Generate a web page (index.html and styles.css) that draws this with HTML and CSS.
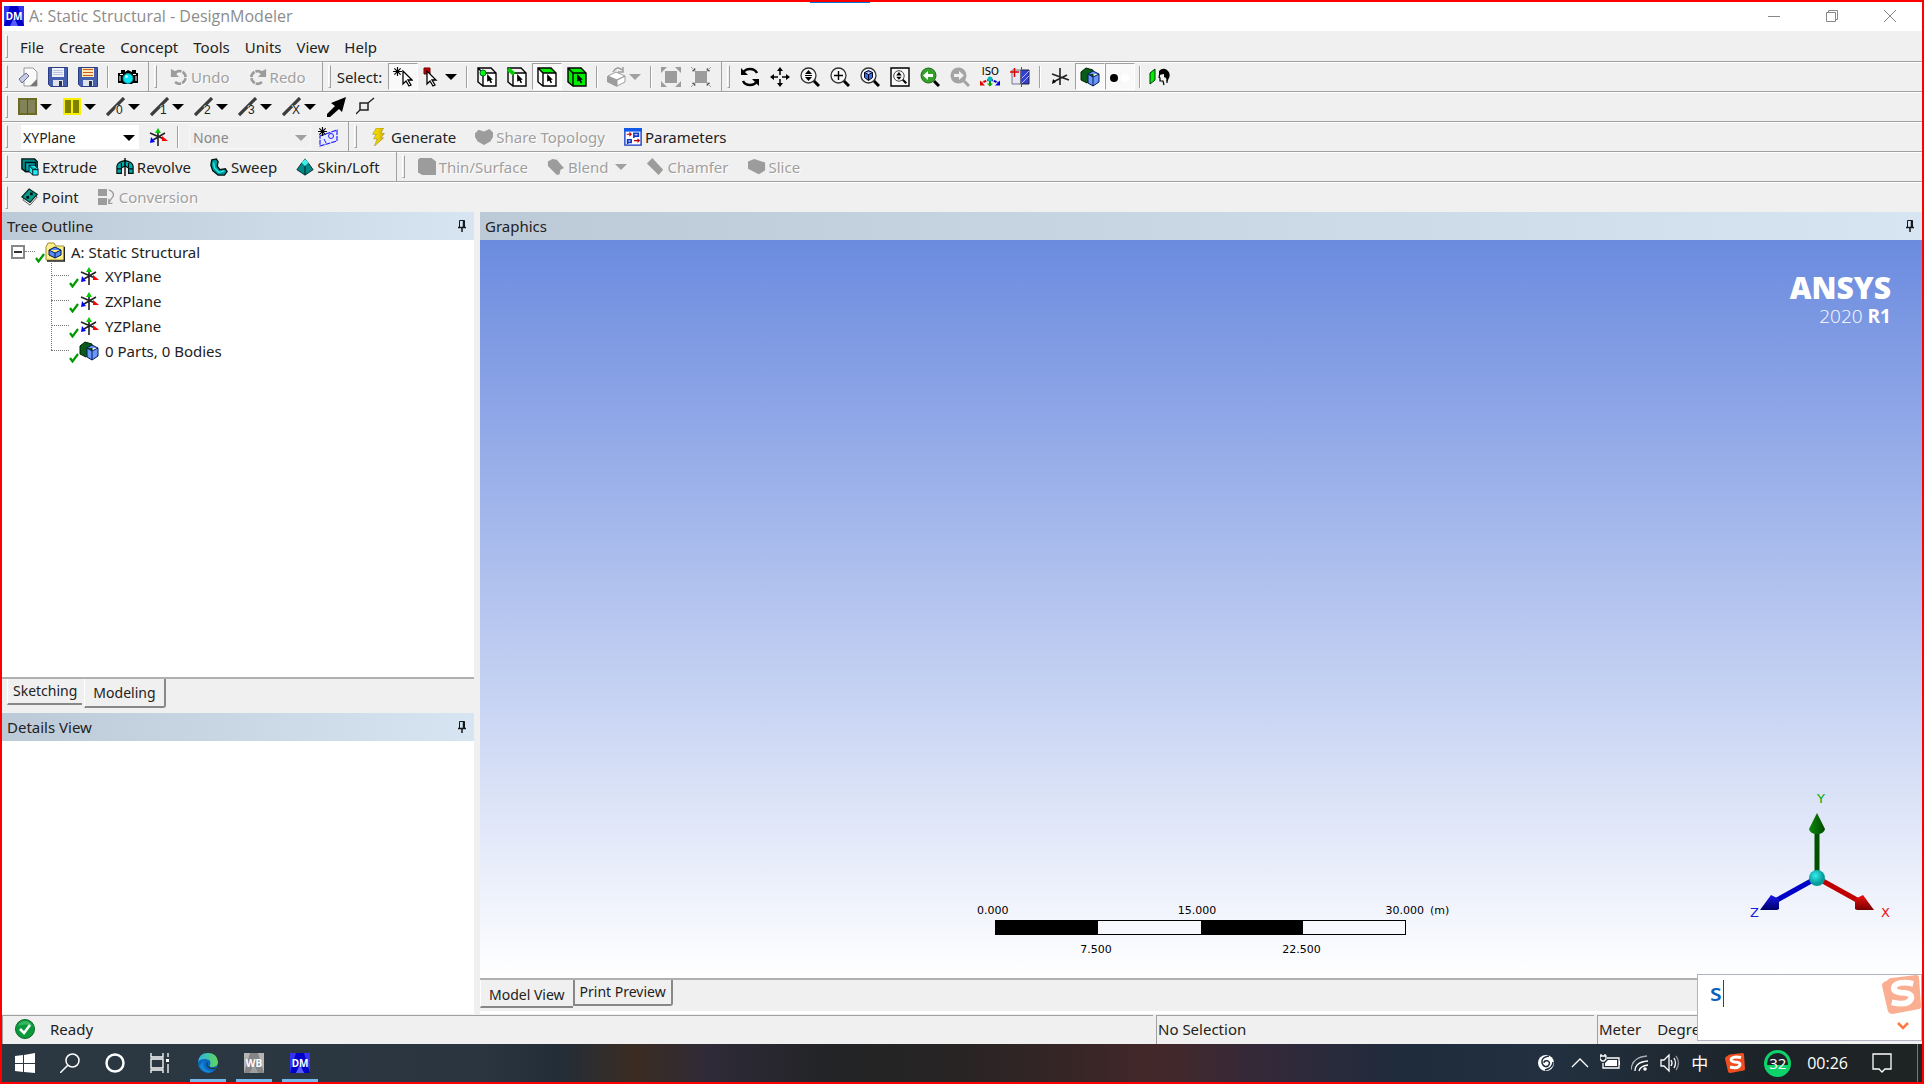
FILE: index.html
```html
<!DOCTYPE html>
<html lang="en">
<head>
<meta charset="utf-8">
<title>A: Static Structural - DesignModeler</title>
<link rel="stylesheet" href="styles.css">
</head>
<body>
<svg class="sprite" aria-hidden="true">
  <defs>
    <linearGradient id="edgeA" x1="0" y1="0" x2="1" y2="0"><stop offset="0" stop-color="#2bb3e8"/><stop offset="1" stop-color="#5fd75a"/></linearGradient>
    <linearGradient id="bolt" x1="0" y1="0" x2="1" y2="0"><stop offset="0" stop-color="#ffe800"/><stop offset="1" stop-color="#d8b400"/></linearGradient>
    <symbol id="dm" viewBox="0 0 20 20"><path fill="#3434f0" d="M0 0h20v20H0z"/><path fill="#0000c8" d="M6 0h8l6 20h-6l-4-8-4 8H0z"/><path fill="#5a5aff" d="M10 12l4 8H6z"/></symbol>
    <symbol id="wb" viewBox="0 0 20 20"><path fill="#b4b4b4" d="M0 0h20v20H0z"/><path fill="#858585" d="M6 0h8l6 20h-6l-4-8-4 8H0z"/><path fill="#a0a0a0" d="M10 12l4 8H6z"/></symbol>
    <symbol id="new" viewBox="0 0 20 20"><path fill="#fafafa" stroke="#999" d="M6 1h9l4 4v14H6z"/><path fill="#777" d="M19 12v7h-7z"/><path fill="#c9cde6" stroke="#666c94" d="M1 12l7-6 3 3-7 7z"/></symbol>
    <symbol id="save" viewBox="0 0 20 20"><path fill="#4560ae" stroke="#2b3c80" d="M.5.5h19v19H3l-2.500-2z"/><path fill="#f0f3fa" d="M4 1h12v9H4z"/><path stroke="#b9c4dc" d="M5 3.500h10M5 5.500h10M5 7.500h10"/><path fill="#dfe3ec" d="M5 13h10v6H5z"/><path fill="#26335f" d="M11 14h3v5h-3z"/></symbol>
    <symbol id="saveas" viewBox="0 0 20 20"><path fill="#4560ae" stroke="#2b3c80" d="M.5.5h19v19H3l-2.500-2z"/><path fill="#ffe9b0" d="M4 1h12v9H4z"/><path stroke="#c85a28" d="M5 2.500h10M5 5.500h10M5 8.500h10"/><path fill="#dfe3ec" d="M5 13h10v6H5z"/><path fill="#26335f" d="M11 14h3v5h-3z"/></symbol>
    <symbol id="camera" viewBox="0 0 20 20"><path d="M0 6h3V3h4v2l3-2 4 2V3h4v3h2v10h-5l-1 1H5l-1-1H0z"/><path stroke="#fff" d="M2 7.500h3M15 7.500h3M2 9v5M18 9v5"/><circle cx="10" cy="11.500" r="5" fill="#00e5f0" stroke="#0a8a94"/><circle cx="8.500" cy="9.500" r="1.500" fill="#c4ffff"/></symbol>
    <symbol id="undo" viewBox="0 0 20 20"><path fill="none" stroke="#fff" stroke-width="3" d="M7 6a7 7 0 1 1 0 11"/><path fill="none" stroke="#9c9c9c" stroke-width="3" stroke-dasharray="7 1" d="M6 5a7 7 0 1 1-1 10"/><path fill="#9c9c9c" d="M1 1v9h9l-3-3 2-2-4-2z"/></symbol>
    <symbol id="redo" viewBox="0 0 20 20"><path fill="none" stroke="#9c9c9c" stroke-width="3" stroke-dasharray="7 1" d="M14 5a7 7 0 1 0 1 10"/><path fill="#9c9c9c" d="M19 1v9h-9l3-3-2-2 4-2z"/></symbol>
    <symbol id="cur" viewBox="0 0 20 20"><path fill="#fff" stroke="#000" stroke-width="1.300" d="M9 4v13l3-3 3 5 2-1-3-5h4z"/></symbol>
    <symbol id="star" viewBox="0 0 10 10"><path stroke="#000" stroke-width="1.300" d="M5 0v10M0 5h10M1.500 1.500l7 7M8.500 1.500l-7 7"/></symbol>
    <symbol id="selnew" viewBox="0 0 20 20"><use href="#star" x="0" y="0" width="9" height="9"/><use href="#cur" x="1"/></symbol>
    <symbol id="selmode" viewBox="0 0 20 20"><path fill="#c00" stroke="#600" d="M1 1h6v6H1z"/><use href="#cur" x="-5"/></symbol>
    <symbol id="pick" viewBox="0 0 10 14"><path d="M1 0v11l3-2 2 4 2-1-2-4h3z"/></symbol>
    <symbol id="cubepick" viewBox="0 0 20 20"><path fill="none" stroke="#000" stroke-width="1.400" d="M1 1h13l5 5v13H6l-5-4zM1 1l5 5h13M6 6v13"/><use href="#pick" x="9" y="7" width="8" height="10"/></symbol>
    <symbol id="cubept" viewBox="0 0 20 20"><path fill="#fff" d="M6 6h13v13H6z"/><use href="#cubepick"/><circle cx="6" cy="6" r="3" fill="#0f0" stroke="#063"/></symbol>
    <symbol id="cubeedge" viewBox="0 0 20 20"><path fill="#fff" d="M6 6h13v13H6z"/><use href="#cubepick"/><path stroke="#0c0" stroke-width="4" d="M1 2l6 5"/></symbol>
    <symbol id="cubeface" viewBox="0 0 20 20"><path fill="#fff" d="M6 6h13v13H6z"/><path fill="#0e0" d="M1 1h13l5 5H6z"/><use href="#cubepick"/></symbol>
    <symbol id="cubebody" viewBox="0 0 20 20"><path fill="#0e0" d="M1 1h13l5 5v13H6l-5-4z"/><use href="#cubepick"/></symbol>
    <symbol id="extend" viewBox="0 0 20 20"><path fill="#fff" stroke="#9c9c9c" d="M10 13l8-4v6l-8 4zM1 9l8-4 9 4-8 4z"/><path fill="#9c9c9c" d="M0 9l10 4v7l-10-5z"/><path fill="none" stroke="#9c9c9c" stroke-width="1.500" d="M6 5q4-7 9-2M16 0v5h-5"/></symbol>
    <symbol id="expand" viewBox="0 0 20 20"><path fill="#9c9c9c" d="M4 4h12v12H4zM0 0h6L0 6zM20 0v6l-6-6zM0 20v-6l6 6zM20 20h-6l6-6z"/></symbol>
    <symbol id="shrink" viewBox="0 0 20 20"><path fill="#9c9c9c" d="M4 4h12v12H4z"/><path stroke="#9c9c9c" d="M0 0l20 20M20 0L0 20M4 1v3H1M16 1v3h3M4 19v-3H1M16 19v-3h3"/></symbol>
    <symbol id="rotate" viewBox="0 0 20 20"><path fill="none" stroke="#000" stroke-width="2.500" d="M17 6q-2-4-7-4-5 0-7 4M3 14q2 4 7 4 5 0 7-4"/><path d="M1 1v7h7zM19 19v-7h-7z"/></symbol>
    <symbol id="pan" viewBox="0 0 20 20"><path stroke="#000" stroke-width="1.500" d="M10 2v6M10 12v6M2 10h6M12 10h6"/><path d="M10 0l3 4H7zM10 20l3-4H7zM0 10l4-3v6zM20 10l-4-3v6z"/></symbol>
    <symbol id="glass" viewBox="0 0 20 20"><circle cx="8.500" cy="8.500" r="7.500" fill="#f8f8f8" stroke="#333" stroke-width="1.300"/><path stroke="#000" stroke-width="3" d="M14 14l5 5"/></symbol>
    <symbol id="zoom" viewBox="0 0 20 20"><use href="#glass"/><path d="M8.500 3l3.500 4H5zM8.500 14l3.500-4H5zM5 8h7v1H5z"/></symbol>
    <symbol id="zoomin" viewBox="0 0 20 20"><use href="#glass"/><path stroke="#000" stroke-width="1.400" d="M8.500 4v9M4 8.500h9"/></symbol>
    <symbol id="zoombody" viewBox="0 0 20 20"><use href="#glass"/><path fill="#3d6fe0" stroke="#002" d="M4.500 5.500l4-2 4 2v5l-4 3-4-3zM4.500 5.500l4 2 4-2M8.500 7.500v6"/></symbol>
    <symbol id="zoomfit" viewBox="0 0 20 20"><path fill="#fafafa" stroke="#000" stroke-width="1.400" d="M1 1h18v18H1z"/><use href="#zoom" x="3" y="3" width="14" height="14"/></symbol>
    <symbol id="zprev" viewBox="0 0 20 20"><path stroke="#000" stroke-width="3" d="M14 14l5 5"/><circle cx="8.500" cy="8.500" r="7.500" fill="#36a02c" stroke="#1d6a18"/><path fill="#fff" d="M3 8.500l5-4.500v3h5v3H8v3z"/></symbol>
    <symbol id="znext" viewBox="0 0 20 20"><path stroke="#a4a4a4" stroke-width="3" d="M14 14l5 5"/><circle cx="8.500" cy="8.500" r="8" fill="#a4a4a4"/><path fill="#f0f0f0" d="M14 8.500L9 4v3H4v3h5v3z"/></symbol>
    <symbol id="isoax" viewBox="0 0 20 10"><path stroke="#080" stroke-width="2" d="M10 2v7"/><path fill="none" stroke="#c00" stroke-width="2" stroke-dasharray="3 1" d="M10 3L2 6"/><path stroke="#00c" stroke-width="2" stroke-dasharray="3 1" d="M10 3l8 3"/><path fill="#d00" d="M0 4v5h5z"/><path fill="#00d" d="M20 4v5h-5z"/><path fill="#0a0" d="M7 7h6l-3 3z"/><circle cx="10" cy="2.500" r="2.500" fill="#0bb"/></symbol>
    <symbol id="lookat" viewBox="0 0 20 20"><path fill="#e6e6f4" stroke="#778" d="M2 3h9v14H2z"/><path fill="#3340d8" stroke="#223" d="M11 3h8v14h-8z"/><path stroke="#b0b8ff" d="M11 12l8-8M11 17l8-8"/><path stroke="#555" d="M11.500 0v20"/><path stroke="#d00" stroke-width="1.500" d="M0 5h9M4.500 1v9"/></symbol>
    <symbol id="axis" viewBox="0 0 20 20"><path stroke="#222" stroke-width="1.600" d="M10 1v17M2 7l17 6M17 8L3 15"/><path d="M2 17l1-5 3 3z"/></symbol>
    <symbol id="plane" viewBox="0 0 20 20"><path stroke="#222" stroke-width="1.600" d="M10 4v15M2 6l14 6M17 6L5 13"/><path fill="#0c0" d="M7 6l3-5 3 5z"/><path fill="#f00" d="M14 9v5h6z"/><path fill="#00f" d="M2 16l1-6 4 5z"/></symbol>
    <symbol id="cubes" viewBox="0 0 20 20"><path fill="#0a5a1a" stroke="#020" d="M1 5l5-4 7 2v9l-6 4-6-3z"/><path fill="#6a98fa" stroke="#001a55" d="M8 7l5-3 6 3v8l-6 4-5-3zM8 7l5 3 6-3M13 10v9"/></symbol>
    <symbol id="dots" viewBox="0 0 20 20"><circle cx="4" cy="11" r="4"/><circle cx="15" cy="11" r="4" fill="#fff"/></symbol>
    <symbol id="face" viewBox="0 0 22 20"><path fill="#0e0" stroke="#031" d="M1 6l5-4v11l-5 4z"/><path d="M10 4q4-4 8-1 4 3 2 8l-2 4-1-4-2-1v-3l-5 1z"/><path fill="none" stroke="#000" stroke-width="1.200" d="M11 6l-1 4 1 1v3h3l1 4M18 13v3"/></symbol>
    <symbol id="sk1" viewBox="0 0 20 20"><path fill="#83835a" stroke="#6a6a20" stroke-width="2" d="M1 2h17v15H1z"/><path stroke="#55552a" d="M9.500 2v15"/></symbol>
    <symbol id="sk2" viewBox="0 0 20 20"><path fill="#808000" stroke="#f6f000" stroke-width="2" d="M2 2h16v15H2z"/><path stroke="#f6f000" stroke-width="2" d="M10 2v15"/></symbol>
    <symbol id="edge" viewBox="0 0 20 20"><path stroke="#3c3c3c" stroke-width="3.200" d="M1 18L18 1"/></symbol>
    <symbol id="arrow" viewBox="0 0 20 20"><path d="M20 0l-4 15-3-3-9 8H1v-3l8-8-4-3z"/></symbol>
    <symbol id="probe" viewBox="0 0 20 20"><path fill="#eee" stroke="#222" stroke-width="1.500" d="M4 6h8v7H4z"/><path stroke="#222" stroke-width="1.300" d="M0 17l4-4M12 6l6-5"/></symbol>
    <symbol id="newplane" viewBox="0 0 20 20"><path fill="#e8ebff" stroke="#22f" stroke-width="1.200" d="M2 9l17-6v11L2 19z" stroke-dasharray="5 1"/><circle cx="13" cy="9" r="2.500" fill="none" stroke="#22f"/><path stroke="#22f" d="M6 12l2 4"/><use href="#star" width="9" height="9"/></symbol>
    <symbol id="boltic" viewBox="0 0 20 20"><path fill="url(#bolt)" stroke="#9a8a20" stroke-width=".7" d="M7 0h8l-3 6h4l-4 5h3L5 20l3-8H4l3-5H3z"/></symbol>
    <symbol id="share" viewBox="0 0 20 20"><path fill="#9c9c9c" d="M0 6l4-4 6 2 6-3 4 4v5l-3 5-7 4-7-4-3-5z"/></symbol>
    <symbol id="param" viewBox="0 0 20 20"><path fill="#fff" stroke="#1038c8" stroke-width="1.500" d="M1 1h18v18H1z"/><path fill="#1058e8" d="M0 0h20v4H0z"/><path fill="none" stroke="#1038c8" stroke-width="1.800" d="M11 11V6h5v3h-5M4 18v-5h4v3H4"/><path fill="none" stroke="#b00" stroke-width="1.200" d="M3 7h5M6 5l2 2-2 2M11 14h6M15 12l2 2-2 2"/></symbol>
    <symbol id="extrude" viewBox="0 0 20 20"><path fill="#088" stroke="#011" stroke-width="1.500" d="M1 1h14l3 3v11H5l-4-3z"/><path fill="#0aa" stroke="#011" stroke-width="1.500" d="M5 5h11v10H5z"/><path fill="#2ee" stroke="#012" d="M9 8h6l4 4v7h-6l-4-4zM9 8l4 5h6M13 13v6"/></symbol>
    <symbol id="revolve" viewBox="0 0 20 20"><path fill="#0aa" stroke="#011" stroke-width="1.300" d="M1 17V9q1-5 9-6 8 1 9 6v8h-5v-6l-4-2-4 2v6zM6 4v6M14 4v6M1 12h5M14 12h5"/><path stroke="#000" stroke-width="1.500" d="M10 0v20"/></symbol>
    <symbol id="sweep" viewBox="0 0 20 20"><path fill="#099" stroke="#011" stroke-width="1.500" d="M2 2l5-1 2 3-1 5 3 4 6-1 2 3-3 4H9l-6-5-2-6z"/><path fill="none" stroke="#2ee" stroke-width="1.500" d="M4 5l1 6 5 5 6-2"/></symbol>
    <symbol id="skin" viewBox="0 0 20 20"><path fill="#088" stroke="#022" d="M10 1l4 5 5 7-9 6-9-6 5-7z"/><path fill="#4ee" d="M10 1l4 4-4 4-4-4z"/><path stroke="#011" d="M10 9v10"/></symbol>
    <symbol id="thin" viewBox="0 0 20 20"><path fill="#9c9c9c" d="M0 2l2-2h13l5 4v15H5l-5-3z"/></symbol>
    <symbol id="blend" viewBox="0 0 20 20"><path fill="#9c9c9c" d="M1 4l5-3 5 1 5 6 3 3-4 2-1 5-3 1L1 9z"/></symbol>
    <symbol id="chamfer" viewBox="0 0 20 20"><path fill="#9c9c9c" d="M1 6l6-6 12 13-5 6z"/></symbol>
    <symbol id="slice" viewBox="0 0 20 20"><path fill="#9c9c9c" d="M0 4l7-3 12 4v9l-7 4L0 12z"/></symbol>
    <symbol id="point" viewBox="0 0 20 20"><path fill="#fff" stroke="#444" d="M2 13l8-8 8 5-8 9z"/><path fill="#0a9a8a" stroke="#022" stroke-width="1.300" d="M1 10l8-9 9 6-8 9z"/><path fill="#011" d="M6 9h3v3H6zM10 5h3v3h-3z"/></symbol>
    <symbol id="conv" viewBox="0 0 20 20"><path fill="#9c9c9c" d="M0 1h10v8H0zM0 11h10v8H0z"/><path fill="none" stroke="#9c9c9c" stroke-width="1.500" d="M12 2q6 2 5 7l-5 7M12 12v5h4"/></symbol>
    <symbol id="pin" viewBox="0 0 10 14"><path fill="none" stroke="#16181d" d="M2.500 8V1.500h5V8"/><path stroke="#16181d" stroke-width="1.500" d="M6.500 1v7M5 8v5M1 8.500h8"/></symbol>
    <symbol id="tick" viewBox="0 0 10 10"><path fill="none" stroke="#090" stroke-width="2.200" d="M1 5l2.500 3.500L9 1"/></symbol>
    <symbol id="folder" viewBox="0 0 20 20"><path fill="#ffef8a" stroke="#a09030" d="M1 5l2-4h6l2 3h8v14H1z"/><path fill="none" stroke="#222" stroke-width="1.500" d="M2 19h17.500V5"/><path fill="#5b8cf5" stroke="#001a55" d="M4 8l6-3 6 3v5l-6 3-6-3zM4 8l6 3 6-3M10 11v5"/></symbol>
    <symbol id="sogou" viewBox="0 0 40 40"><path d="M6 5q1-2 4-2L35 0q3 0 3 3l2 29q0 3-3 3L11 40q-4 0-5-3L0 11q0-3 3-4z"/><path fill="none" stroke="#fff" stroke-width="6" d="M32 9q-14-3-19 2-3 6 6 7 12 0 11 6-3 8-20 4"/></symbol>
    <symbol id="win" viewBox="0 0 20 20"><path fill="#fff" d="M0 3l8-1v8H0zM9 2l11-2v10H9zM0 11h8v8l-8-1zM9 11h11v9L9 19z"/></symbol>
    <symbol id="search" viewBox="0 0 20 20"><circle cx="12.500" cy="7.500" r="6.500" fill="none" stroke="#fff" stroke-width="1.500"/><path stroke="#fff" stroke-width="1.500" d="M8 12l-8 8"/></symbol>
    <symbol id="cortana" viewBox="0 0 20 20"><circle cx="10" cy="10" r="8.500" fill="none" stroke="#fff" stroke-width="2.500"/></symbol>
    <symbol id="tasks" viewBox="0 0 20 20"><path fill="none" stroke="#fff" stroke-width="1.300" d="M1 0v4h12V0M1 6h12v9H1zM1 20v-3h12v3M18 0v4M18 11v9"/><path fill="#fff" d="M16 6h3v3h-3z"/></symbol>
    <symbol id="edgeic" viewBox="0 0 20 20"><circle cx="10" cy="10" r="10" fill="#0c68bd"/><path fill="url(#edgeA)" d="M0 9Q1 0 10 0q9 0 10 9 0 5-6 5-3 0-2-2 2-6-5-6-5 0-7 3z"/><path fill="#1286d8" d="M7 7q-3 4 0 8 3 4 9 3-9 5-15-5z"/><path fill="#2b3740" d="M10 9q-1 3 1 5 3 2 8 0l-2 2q-6 1-8-3-1-3 1-4z"/></symbol>
    <symbol id="ok" viewBox="0 0 20 20"><circle cx="10" cy="10" r="9.500" fill="#0a9a3a" stroke="#086a28"/><path fill="#5cc87c" opacity=".6" d="M3 7q2-5 8-5 5 1 6 5-7-3-14 0z"/><path fill="none" stroke="#fff" stroke-width="2.500" d="M5 10l4 4 6-8"/></symbol>
  </defs>
</svg>

<div class="window">
  <header class="titlebar">
    <span class="app-badge"><svg class="i20"><use href="#dm"/></svg><b>DM</b></span>
    <h1>A: Static Structural - DesignModeler</h1>
    <span class="top-mark"></span>
    <div class="window-controls">
      <button aria-label="Minimize"><svg class="i12" viewBox="0 0 12 12"><path stroke="#888" d="M0 6.500h12"/></svg></button>
      <button aria-label="Restore"><svg class="i12" viewBox="0 0 12 12"><path fill="none" stroke="#888" d="M.5 2.500h9v9h-9zM2.500 2V.5h9v9H10"/></svg></button>
      <button aria-label="Close"><svg class="i12" viewBox="0 0 12 12"><path stroke="#888" d="M0 0l12 12M12 0L0 12"/></svg></button>
    </div>
  </header>

  <nav class="row menu-row">
    <span class="grip"></span>
    <button>File</button><button>Create</button><button>Concept</button><button>Tools</button><button>Units</button><button>View</button><button>Help</button>
  </nav>

  <div class="row">
    <div class="band"><span class="grip"></span>
      <button class="tool" aria-label="New"><svg class="i20"><use href="#new"/></svg></button>
      <button class="tool" aria-label="Save"><svg class="i20"><use href="#save"/></svg></button>
      <button class="tool" aria-label="Save as"><svg class="i20"><use href="#saveas"/></svg></button>
      <span class="sep"></span>
      <button class="tool" aria-label="Image capture"><svg class="i20"><use href="#camera"/></svg></button>
    </div>
    <div class="band"><span class="grip"></span>
      <button class="text-tool" disabled><svg class="i18"><use href="#undo"/></svg>Undo</button>
      <button class="text-tool" disabled><svg class="i18"><use href="#redo"/></svg>Redo</button>
    </div>
    <div class="band"><span class="grip"></span>
      <span class="tool-label">Select:</span>
      <button class="tool pressed" aria-label="New selection"><svg class="i20"><use href="#selnew"/></svg></button>
      <button class="tool drop" aria-label="Select mode"><svg class="i20"><use href="#selmode"/></svg><i class="caret"></i></button>
      <span class="sep"></span>
      <button class="tool" aria-label="Points"><svg class="i20"><use href="#cubept"/></svg></button>
      <button class="tool" aria-label="Edges"><svg class="i20"><use href="#cubeedge"/></svg></button>
      <button class="tool pressed" aria-label="Faces"><svg class="i20"><use href="#cubeface"/></svg></button>
      <button class="tool" aria-label="Bodies"><svg class="i20"><use href="#cubebody"/></svg></button>
      <span class="sep"></span>
      <button class="tool drop" disabled aria-label="Extend"><svg class="i20"><use href="#extend"/></svg><i class="caret"></i></button>
      <span class="sep"></span>
      <button class="tool" disabled aria-label="Expand"><svg class="i20"><use href="#expand"/></svg></button>
      <button class="tool" disabled aria-label="Shrink"><svg class="i20"><use href="#shrink"/></svg></button>
    </div>
    <div class="band last"><span class="grip"></span>
      <button class="tool" aria-label="Rotate"><svg class="i20"><use href="#rotate"/></svg></button>
      <button class="tool" aria-label="Pan"><svg class="i20"><use href="#pan"/></svg></button>
      <button class="tool" aria-label="Zoom"><svg class="i20"><use href="#zoom"/></svg></button>
      <button class="tool" aria-label="Box zoom"><svg class="i20"><use href="#zoomin"/></svg></button>
      <button class="tool" aria-label="Zoom body"><svg class="i20"><use href="#zoombody"/></svg></button>
      <button class="tool" aria-label="Zoom to fit"><svg class="i20"><use href="#zoomfit"/></svg></button>
      <button class="tool" aria-label="Previous view"><svg class="i20"><use href="#zprev"/></svg></button>
      <button class="tool" disabled aria-label="Next view"><svg class="i20"><use href="#znext"/></svg></button>
      <button class="tool iso" aria-label="Isometric view"><span>ISO</span><svg><use href="#isoax"/></svg></button>
      <button class="tool" aria-label="Look at"><svg class="i20"><use href="#lookat"/></svg></button>
      <span class="sep"></span>
      <button class="tool" aria-label="Display plane"><svg class="i20"><use href="#axis"/></svg></button>
      <button class="tool pressed" aria-label="Display model"><svg class="i20"><use href="#cubes"/></svg></button>
      <button class="tool pressed" aria-label="Display points"><svg class="i20"><use href="#dots"/></svg></button>
      <span class="sep"></span>
      <button class="tool" aria-label="Look at face"><svg class="i22"><use href="#face"/></svg></button>
    </div>
  </div>

  <div class="row">
    <div class="band last"><span class="grip"></span>
      <button class="tool drop" aria-label="Face color"><svg class="i20"><use href="#sk1"/></svg><i class="caret"></i></button>
      <button class="tool drop" aria-label="Edge color"><svg class="i20"><use href="#sk2"/></svg><i class="caret"></i></button>
      <button class="tool drop edge"><svg class="i20"><use href="#edge"/></svg><b>0</b><i class="caret"></i></button>
      <button class="tool drop edge"><svg class="i20"><use href="#edge"/></svg><b>1</b><i class="caret"></i></button>
      <button class="tool drop edge"><svg class="i20"><use href="#edge"/></svg><b>2</b><i class="caret"></i></button>
      <button class="tool drop edge"><svg class="i20"><use href="#edge"/></svg><b>3</b><i class="caret"></i></button>
      <button class="tool drop edge"><svg class="i20"><use href="#edge"/></svg><b>X</b><i class="caret"></i></button>
      <button class="tool" aria-label="Edge direction"><svg class="i20"><use href="#arrow"/></svg></button>
      <button class="tool" aria-label="Vertices"><svg class="i20"><use href="#probe"/></svg></button>
    </div>
  </div>

  <div class="row">
    <div class="band"><span class="grip"></span>
      <div class="combo"><select aria-label="Active plane"><option>XYPlane</option></select><i class="caret"></i></div>
      <button class="tool" aria-label="New plane"><svg class="i20"><use href="#plane"/></svg></button>
      <span class="sep"></span>
      <div class="combo off"><select aria-label="Active sketch" disabled><option>None</option></select><i class="caret"></i></div>
      <button class="tool" aria-label="New sketch"><svg class="i20"><use href="#newplane"/></svg></button>
    </div>
    <div class="band last"><span class="grip"></span>
      <button class="text-tool"><svg class="i18"><use href="#boltic"/></svg>Generate</button>
      <button class="text-tool" disabled><svg class="i18"><use href="#share"/></svg>Share Topology</button>
      <button class="text-tool"><svg class="i18"><use href="#param"/></svg>Parameters</button>
    </div>
  </div>

  <div class="row">
    <div class="band"><span class="grip"></span>
      <button class="text-tool"><svg class="i18"><use href="#extrude"/></svg>Extrude</button>
      <button class="text-tool"><svg class="i18"><use href="#revolve"/></svg>Revolve</button>
      <button class="text-tool"><svg class="i18"><use href="#sweep"/></svg>Sweep</button>
      <button class="text-tool"><svg class="i18"><use href="#skin"/></svg>Skin/Loft</button>
    </div>
    <div class="band last"><span class="grip"></span>
      <button class="text-tool" disabled><svg class="i18"><use href="#thin"/></svg>Thin/Surface</button>
      <button class="text-tool" disabled><svg class="i18"><use href="#blend"/></svg>Blend<i class="caret"></i></button>
      <button class="text-tool" disabled><svg class="i18"><use href="#chamfer"/></svg>Chamfer</button>
      <button class="text-tool" disabled><svg class="i18"><use href="#slice"/></svg>Slice</button>
    </div>
  </div>

  <div class="row final">
    <div class="band last"><span class="grip"></span>
      <button class="text-tool"><svg class="i18"><use href="#point"/></svg>Point</button>
      <button class="text-tool" disabled><svg class="i18"><use href="#conv"/></svg>Conversion</button>
    </div>
  </div>

  <main class="workspace">
    <aside class="side">
      <section class="tree-panel">
        <h2 class="panel-head">Tree Outline<svg><use href="#pin"/></svg></h2>
        <div class="tree">
          <div class="node root"><button class="toggle" aria-label="Collapse"></button><i class="dots"></i><svg class="tick"><use href="#tick"/></svg><svg class="i20"><use href="#folder"/></svg><span>A: Static Structural</span></div>
          <ul>
            <li class="node"><i class="dots"></i><svg class="tick"><use href="#tick"/></svg><svg class="i20"><use href="#plane"/></svg><span>XYPlane</span></li>
            <li class="node"><i class="dots"></i><svg class="tick"><use href="#tick"/></svg><svg class="i20"><use href="#plane"/></svg><span>ZXPlane</span></li>
            <li class="node"><i class="dots"></i><svg class="tick"><use href="#tick"/></svg><svg class="i20"><use href="#plane"/></svg><span>YZPlane</span></li>
            <li class="node"><i class="dots"></i><svg class="tick"><use href="#tick"/></svg><svg class="i20"><use href="#cubes"/></svg><span>0 Parts, 0 Bodies</span></li>
          </ul>
        </div>
        <div class="tabs side-tabs"><button class="tab">Sketching</button><button class="tab active">Modeling</button></div>
      </section>
      <section class="details">
        <h2 class="panel-head">Details View<svg><use href="#pin"/></svg></h2>
      </section>
    </aside>

    <section class="graphics">
      <h2 class="panel-head">Graphics<svg><use href="#pin"/></svg></h2>
      <div class="canvas">
        <div class="brand"><strong>ANSYS</strong><span>2020 <b>R1</b></span></div>
        <div class="scale">
          <div class="scale-top"><span>0.000</span><span>15.000</span><span>30.000</span><em>(m)</em></div>
          <div class="scale-bar"><i></i><i></i><i></i><i></i></div>
          <div class="scale-bottom"><span>7.500</span><span>22.500</span></div>
        </div>
        <svg class="triad" viewBox="0 0 150 140">
          <defs>
            <linearGradient id="gy"><stop offset="0" stop-color="#0a8a0a"/><stop offset="1" stop-color="#004800"/></linearGradient>
            <linearGradient id="gx" x1="0" y1="0" x2="0" y2="1"><stop offset="0" stop-color="#f01010"/><stop offset="1" stop-color="#700"/></linearGradient>
            <linearGradient id="gz" x1="0" y1="0" x2="0" y2="1"><stop offset="0" stop-color="#1818f0"/><stop offset="1" stop-color="#006"/></linearGradient>
            <radialGradient id="gc" cx=".4" cy=".35"><stop offset="0" stop-color="#3ee"/><stop offset="1" stop-color="#089a9a"/></radialGradient>
          </defs>
          <path stroke="#005000" stroke-width="5" d="M70 88V40"/>
          <path fill="url(#gy)" d="M70 23l8 16q-1 5-8 5t-8-5z"/>
          <path stroke="#0000c8" stroke-width="5" d="M66 90L30 110"/>
          <path stroke="#c00000" stroke-width="5" d="M74 90l36 20"/>
          <path fill="url(#gz)" d="M13 120l11-15 8 4v10l-2 1z"/>
          <path fill="url(#gx)" d="M127 120l-11-15-8 4v10l2 1z"/>
          <circle cx="70" cy="88" r="8" fill="url(#gc)"/>
          <g class="triad-label"><text x="70" y="13" fill="#00a800">Y</text><text x="3" y="127" fill="#2020e0">Z</text><text x="134" y="127" fill="#f01010">X</text></g>
        </svg>
      </div>
      <div class="tabs view-tabs"><button class="tab active">Model View</button><button class="tab raised">Print Preview</button></div>
    </section>
  </main>

  <footer class="status">
    <div class="ready"><svg class="i20"><use href="#ok"/></svg><span>Ready</span></div>
    <div class="selection">No Selection</div>
    <div class="units"><span>Meter</span><span>Degree</span></div>
  </footer>

  <div class="taskbar">
    <button aria-label="Start"><svg class="i20"><use href="#win"/></svg></button>
    <button aria-label="Search"><svg class="i20"><use href="#search"/></svg></button>
    <button aria-label="Cortana"><svg class="i20"><use href="#cortana"/></svg></button>
    <button aria-label="Task view"><svg class="i20"><use href="#tasks"/></svg></button>
    <div class="apps">
      <button class="running" aria-label="Edge"><svg class="i20"><use href="#edgeic"/></svg></button>
      <button class="running"><span class="app-badge"><svg class="i20"><use href="#wb"/></svg><b>WB</b></span></button>
      <button class="running"><span class="app-badge"><svg class="i20"><use href="#dm"/></svg><b>DM</b></span></button>
    </div>
    <div class="tray">
      <svg class="i18 tray-swirl" viewBox="0 0 18 18"><circle cx="9" cy="9" r="8" fill="#fff"/><path fill="none" stroke="#1f2c3c" stroke-width="1.500" d="M12 2q-8 1-7 7 2 5 6 3 3-3 0-5-4-1-4 2M16 8q0 6-8 8"/></svg>
      <svg class="i18" viewBox="0 0 18 18"><path fill="none" stroke="#fff" stroke-width="1.300" d="M1 13l8-8 8 8"/></svg>
      <svg class="i20" viewBox="0 0 20 20"><path fill="none" stroke="#fff" stroke-width="1.300" d="M7 5h12v10H3v-5M1 1v2M5 1v2M0 3h6v3l-2 2H2L0 6z"/><path fill="#fff" d="M8 7h9v6H5v-3zM19 8h1v4h-1z"/></svg>
      <svg class="i18" viewBox="0 0 18 18"><path fill="none" stroke="#aab0b6" stroke-width="1.300" d="M0 16Q1 3 16 2"/><path fill="none" stroke="#fff" stroke-width="1.300" d="M8 17q1-5 9-6M4 17Q4 8 17 7"/><circle cx="14" cy="15" r="1.800" fill="#fff"/></svg>
      <svg class="i20" viewBox="0 0 20 20"><path fill="none" stroke="#fff" stroke-width="1.300" d="M1 7h3l5-5v16l-5-5H1zM11 7q2 3 0 6M14 5q3 5 0 10"/><path fill="none" stroke="#8a9199" stroke-width="1.300" d="M16 3q5 7 0 14"/></svg>
      <span class="lang">中</span>
      <svg class="i20 tray-sogou"><use href="#sogou"/></svg>
      <span class="meter">32</span>
      <time>00:26</time>
      <svg class="i20" viewBox="0 0 20 20"><path fill="none" stroke="#fff" stroke-width="1.300" d="M1 1h18v15h-6l-3 3-3-3H1z"/></svg>
    </div>
    <span class="show-desktop"></span>
  </div>

  <div class="ime">
    <span>s</span>
    <svg class="ime-logo"><use href="#sogou"/></svg>
    <button aria-label="More"><svg viewBox="0 0 12 8"><path fill="none" stroke="#ff7840" stroke-width="2.500" d="M1 1l5 5 5-5"/></svg></button>
  </div>
</div>
</body>
</html>
```
FILE: styles.css
```css
* { box-sizing: border-box; }
body {
  margin: 0;
  font: 15px/20px "Noto Sans", "Noto Sans CJK SC", sans-serif;
  color: #222;
}
button, select { font: inherit; color: inherit; border: 0; background: none; padding: 0; margin: 0; }
h1, h2, ul { margin: 0; padding: 0; font-weight: 400; font-size: 15px; }
svg { display: block; flex: none; }
.sprite { position: absolute; width: 0; height: 0; }
.i12 { width: 12px; height: 12px; }
.i18 { width: 18px; height: 18px; }
.i20 { width: 20px; height: 20px; }
.i22 { width: 22px; height: 20px; }

.window {
  position: relative;
  display: flex;
  flex-direction: column;
  height: 100vh;
  border: 2px solid #f00;
  background: #f0f0f0;
  overflow: hidden;
}

/* Title bar */
.titlebar { display: flex; align-items: center; height: 29px; padding: 0 0 2px 2px; background: #fff; flex: none; position: relative; }
.titlebar h1 { margin-left: 5px; color: #8c8c8c; font: 16px/20px "Open Sans", sans-serif; }
.app-badge { position: relative; display: block; }
.app-badge b { position: absolute; inset: 0; text-align: center; color: #fff; font-size: 10px; line-height: 20px; }
.top-mark { position: absolute; left: 42.1%; top: 0; width: 60px; height: 1px; background: #0078d7; }
.window-controls { display: flex; margin-left: auto; padding-right: 3px; }
.window-controls button { display: grid; place-items: center; width: 58px; height: 27px; }

/* Toolbars */
.row { display: flex; height: 30px; border-bottom: 1px solid #a0a0a0; box-shadow: 0 1px #fff; flex: none; gap: 2px; }
.menu-row { height: 31px; gap: 1px; }
.menu-row button { padding: 2px 7px 0; }
.menu-row .grip { margin-right: 4px; }
.final { border-bottom: 0; box-shadow: none; }
.band { display: flex; align-items: center; padding-right: 5px; border-right: 1px solid #a0a0a0; }
.band.last { border-right: 0; }
.grip { align-self: center; width: 3px; height: 23px; margin: 0 5px 0 3px; border: 1px solid #fff; border-right-color: #a0a0a0; border-bottom-color: #a0a0a0; }
.sep { width: 2px; height: 22px; margin: 0 4px; border-left: 1px solid #a0a0a0; border-right: 1px solid #fff; }
.tool { display: flex; align-items: center; justify-content: center; width: 30px; height: 27px; position: relative; }
.tool.drop { width: 44px; gap: 2px; }
.tool.pressed { background: #f9f9f9; border: 1px solid #fff; border-left-color: #a0a0a0; border-top-color: #a0a0a0; }
.caret { flex: none; border: 6px solid transparent; border-top-color: #000; border-bottom: 0; }
:disabled .caret, .off .caret { border-top-color: #a0a0a0; }
.tool-label { padding: 0 6px 0 1px; }
.text-tool { display: flex; align-items: center; gap: 3px; padding: 0 11px 0 8px; height: 27px; white-space: nowrap; }
.text-tool .caret { margin-left: 4px; }
.text-tool:disabled { color: #a0a0a0; text-shadow: 1px 1px #fff; }
.edge b { position: absolute; left: 15px; top: 9px; font: 12px/16px "Liberation Sans", sans-serif; color: #222; text-shadow: 1px 0 #f0f0f0, -1px 0 #f0f0f0; }
.iso { flex-direction: column; }
.iso span { font: 10px/9px "DejaVu Sans", sans-serif; color: #000; }
.iso svg { width: 20px; height: 11px; }
.combo { position: relative; width: 118px; margin: 0 4px 0 8px; }
.combo select { appearance: none; width: 100%; height: 24px; padding: 2px 0 0 2px; background: #fff; color: #222; border-radius: 0; font-size: 14px; }
.combo .caret { position: absolute; right: 4px; top: 10px; pointer-events: none; }
.combo.off { width: 122px; margin: 0 2px 0 6px; }
.combo.off select { background: #f0f0f0; border: 1px solid #f8f8f8; color: #888; opacity: 1; padding-left: 3px; }

/* Work area */
.workspace { display: grid; grid-template-columns: 472px minmax(0, 1fr); column-gap: 6px; flex: 1; min-height: 0; }
.side { display: grid; grid-template-rows: 501px minmax(0, 1fr); }
.tree-panel, .details, .graphics { display: flex; flex-direction: column; min-height: 0; }
.panel-head { display: flex; align-items: center; justify-content: space-between; height: 28px; padding: 0 7px 0 5px; background: linear-gradient(90deg, #bccad8, #d7e5f2); flex: none; line-height: 20px; }
.panel-head svg { width: 10px; height: 14px; }
.tree { flex: 1; background: #fff; }
.tree ul { list-style: none; margin-left: 49px; position: relative; }
.tree ul::before { content: ""; position: absolute; left: 0; top: 0; height: 87px; border-left: 1px dotted #777; }
.node { display: flex; align-items: center; height: 25px; }
.node span { margin-left: 6px; }
.dots { width: 18px; border-top: 1px dotted #777; }
.root .dots { width: 10px; }
.node.root { padding-left: 9px; height: 23px; }
.tick { width: 10px; height: 10px; align-self: flex-end; }
.toggle { display: grid; place-items: center; width: 14px; height: 14px; border: 2px solid #888; }
.toggle::before { content: ""; width: 8px; height: 2px; background: #333; }
.details { background: #fff; }

.tabs { display: flex; align-items: flex-start; flex: none; font-size: 14px; }
.side-tabs { height: 36px; border-top: 2px solid #b0b0b0; padding-left: 5px; }
.tab { height: 28px; padding: 0 5px; border-bottom: 2px solid #888; border-left: 1px solid #fff; }
.side-tabs .tab { line-height: 22px; height: 26px; }
.side-tabs .tab.active { height: 29px; line-height: 28px; padding: 0 8px; border-right: 2px solid #888; margin-left: 2px; border-radius: 0 0 3px; }
.view-tabs { height: 36px; background: #f0f0f0; border-top: 2px solid #b0b0b0; border-bottom: 3px solid #fff; }
.view-tabs .tab { padding: 0 8px; line-height: 30px; }
.view-tabs .tab.raised { padding: 0 5px; height: 26px; line-height: 24px; border-right: 2px solid #888; border-left: 2px solid #888; border-radius: 0 0 3px; }

.canvas { flex: 1; position: relative; background: linear-gradient(#6b8bdf, #fff); }
.brand { position: absolute; right: 31px; top: 30px; display: flex; flex-direction: column; align-items: flex-end; color: #fff; font-family: "Open Sans", sans-serif; }
.brand strong { font: 800 30px/36px "Open Sans", sans-serif; }
.brand span { font: 300 19px/20px "Open Sans", sans-serif; }
.brand b { font-weight: 700; }
.scale { position: absolute; left: 515px; bottom: 21px; width: 411px; color: #000; font: 11px/14px "DejaVu Sans", sans-serif; }
.scale-top { display: flex; justify-content: space-between; margin: 0 -18px 2px; position: relative; }
.scale-top em { position: absolute; left: 100%; margin-left: 6px; font-style: normal; }
.scale-bar { display: grid; grid-template-columns: repeat(4, 1fr); height: 15px; border: 1px solid #000; background: #f6f8fe; }
.scale-bar i:nth-child(odd) { background: #000; }
.scale-bottom { display: flex; justify-content: space-around; margin-top: 8px; text-align: center; }
.triad { position: absolute; right: 25px; bottom: 48px; width: 150px; height: 140px; }
.triad-label { font: 13px "DejaVu Sans", sans-serif; }

/* Status bar */
.status { display: flex; gap: 3px; height: 30px; flex: none; padding-top: 1px; }
.status > div { display: flex; align-items: center; border-top: 1px solid #a0a0a0; border-left: 1px solid #a0a0a0; padding: 0 0 2px 1px; }
.status .ready { flex: 1; padding-left: 12px; gap: 15px; }
.status .selection { width: 438px; }
.status .units { width: 325px; gap: 16px; }

/* Windows taskbar */
.taskbar {
  display: flex;
  height: 38px;
  flex: none;
  background: linear-gradient(90deg, #2b3842 0, #2a3540 25%, #232d38 29%, #3b2c22 33%, #2e2a38 37%, #222426 43%, #282424 50%, #3a2627 57%, #442829 60%, #32293a 66%, #1f2c3c 73%, #22303f 81%, #1c2328 92%, #1f2323 100%);
}
.taskbar button { display: grid; place-items: center; width: 45px; }
.apps { display: flex; gap: 10px; margin-left: 8px; }
.taskbar .running { width: 36px; border-bottom: 3px solid #76b9ed; padding-top: 3px; }
.tray { display: flex; align-items: center; gap: 11px; margin-left: auto; color: #fff; font: 16px/20px "Open Sans", sans-serif; padding-right: 25px; }
.tray-swirl { margin-right: 5px; }
.tray-sogou { fill: #f04e1e; margin: 0 8px 0 6px; }
.tray time { margin: 0 13px 0 5px; }
.lang { font: 17px/20px "Noto Sans CJK SC", sans-serif; }
.meter { width: 27px; height: 27px; border: 3px solid #0dd36b; border-radius: 50%; text-align: center; line-height: 21px; font-size: 15px; background: linear-gradient(transparent 55%, #0dd36b 55%); }
.show-desktop { width: 5px; border-left: 1px solid #777; }

/* Input method window */
.ime { position: absolute; right: 0; bottom: 41px; width: 225px; height: 67px; border: 1px solid #b0b3c0; background: #fff; }
.ime span { display: block; width: 14px; height: 27px; margin: 5px 0 0 12px; border-right: 1px solid #d00; color: #0b62c0; font: 600 24px/24px "Open Sans", sans-serif; }
.ime-logo { position: absolute; right: 0; top: 0; width: 39px; height: 39px; fill: #fbaf92; }
.ime button { position: absolute; right: 12px; bottom: 10px; }
.ime button svg { width: 12px; height: 8px; }
```
